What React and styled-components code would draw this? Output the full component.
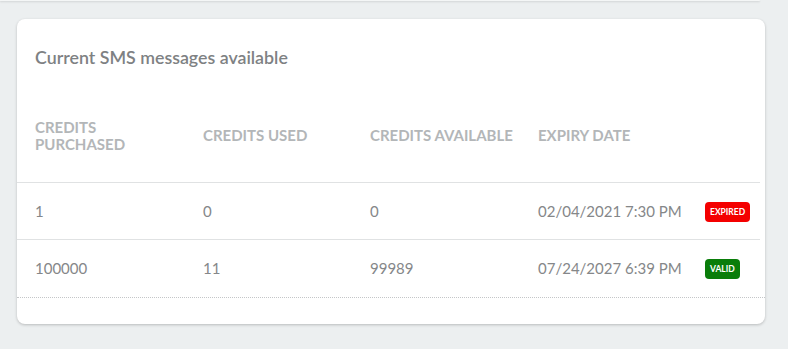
import * as React from 'react';
import styled, { createGlobalStyle } from 'styled-components';

const GlobalStyle = createGlobalStyle`
  body {
    margin: 0;
    background: #eceff0;
    font-family: 'Lato', 'Liberation Sans', sans-serif;
  }
`;

const Page = styled.div`
  width: 788px;
  height: 349px;
  overflow: hidden;
`;

const PrevCard = styled.div`
  width: 760px;
  height: 1px;
  background: #f4f6f6;
  border-bottom-right-radius: 6px;
  box-shadow: 0 1px 2px rgba(0, 0, 0, 0.16);
`;

const Card = styled.div`
  margin: 18px 23px 0 17px;
  height: 305px;
  background: #fff;
  border-radius: 8px;
  box-shadow: 0 1px 3px rgba(0, 0, 0, 0.22);
  display: flex;
  flex-direction: column;
`;

const Title = styled.h2`
  margin: 0;
  padding: 26px 18px 0;
  font-size: 17.8px;
  font-weight: 600;
  color: #7e8183;
  line-height: 24px;
`;

const Table = styled.table`
  width: 743px;
  border-collapse: collapse;
  table-layout: fixed;
  margin-top: 20px;
`;

const Col = styled.col`
  width: ${(p) => p.$w};
`;

const Th = styled.th`
  text-align: left;
  padding: 0 18px;
  height: 93px;
  font-size: 15px;
  font-weight: 700;
  line-height: 17px;
  color: #b3b6b8;
  text-transform: uppercase;
  vertical-align: middle;
  border-bottom: 1px solid #e0e2e3;
  white-space: nowrap;
`;

const Row = styled.tr`
  border-bottom: 1px solid ${(p) => (p.$last ? 'transparent' : '#e0e2e3')};
`;

const Td = styled.td`
  padding: 0 18px;
  height: 56px;
  font-size: 15px;
  color: #858789;
  vertical-align: middle;
  white-space: nowrap;
`;

const Badge = styled.span`
  display: inline-block;
  padding: 0 5px;
  height: 20px;
  line-height: 20px;
  border-radius: 4px;
  font-size: 8.5px;
  font-weight: 700;
  color: #fff;
  text-transform: uppercase;
  background: ${(p) => (p.$valid ? '#0a7d0a' : '#f40000')};
`;

const DottedRule = styled.div`
  border-top: 1px dotted #c4c6c8;
`;

const credits = [
  { id: 1, purchased: 1, used: 0, available: 0, expiry: '02/04/2021 7:30 PM', valid: false },
  { id: 2, purchased: 100000, used: 11, available: 99989, expiry: '07/24/2027 6:39 PM', valid: true },
];

const App = () => (
  <Page>
    <GlobalStyle />
    <PrevCard />
    <Card>
      <Title>Current SMS messages available</Title>
      <Table>
        <colgroup>
          <Col $w="168px" />
          <Col $w="167px" />
          <Col $w="168px" />
          <Col $w="167px" />
          <Col $w="73px" />
        </colgroup>
        <thead>
          <tr>
            <Th>
              Credits
              <br />
              Purchased
            </Th>
            <Th>Credits used</Th>
            <Th>Credits available</Th>
            <Th>Expiry date</Th>
            <Th />
          </tr>
        </thead>
        <tbody>
          {credits.map((c, i) => (
            <Row key={c.id} $last={i === credits.length - 1}>
              <Td>{c.purchased}</Td>
              <Td>{c.used}</Td>
              <Td>{c.available}</Td>
              <Td>{c.expiry}</Td>
              <Td>
                <Badge $valid={c.valid}>{c.valid ? 'Valid' : 'Expired'}</Badge>
              </Td>
            </Row>
          ))}
        </tbody>
      </Table>
      <DottedRule />
    </Card>
  </Page>
);

export default App;
